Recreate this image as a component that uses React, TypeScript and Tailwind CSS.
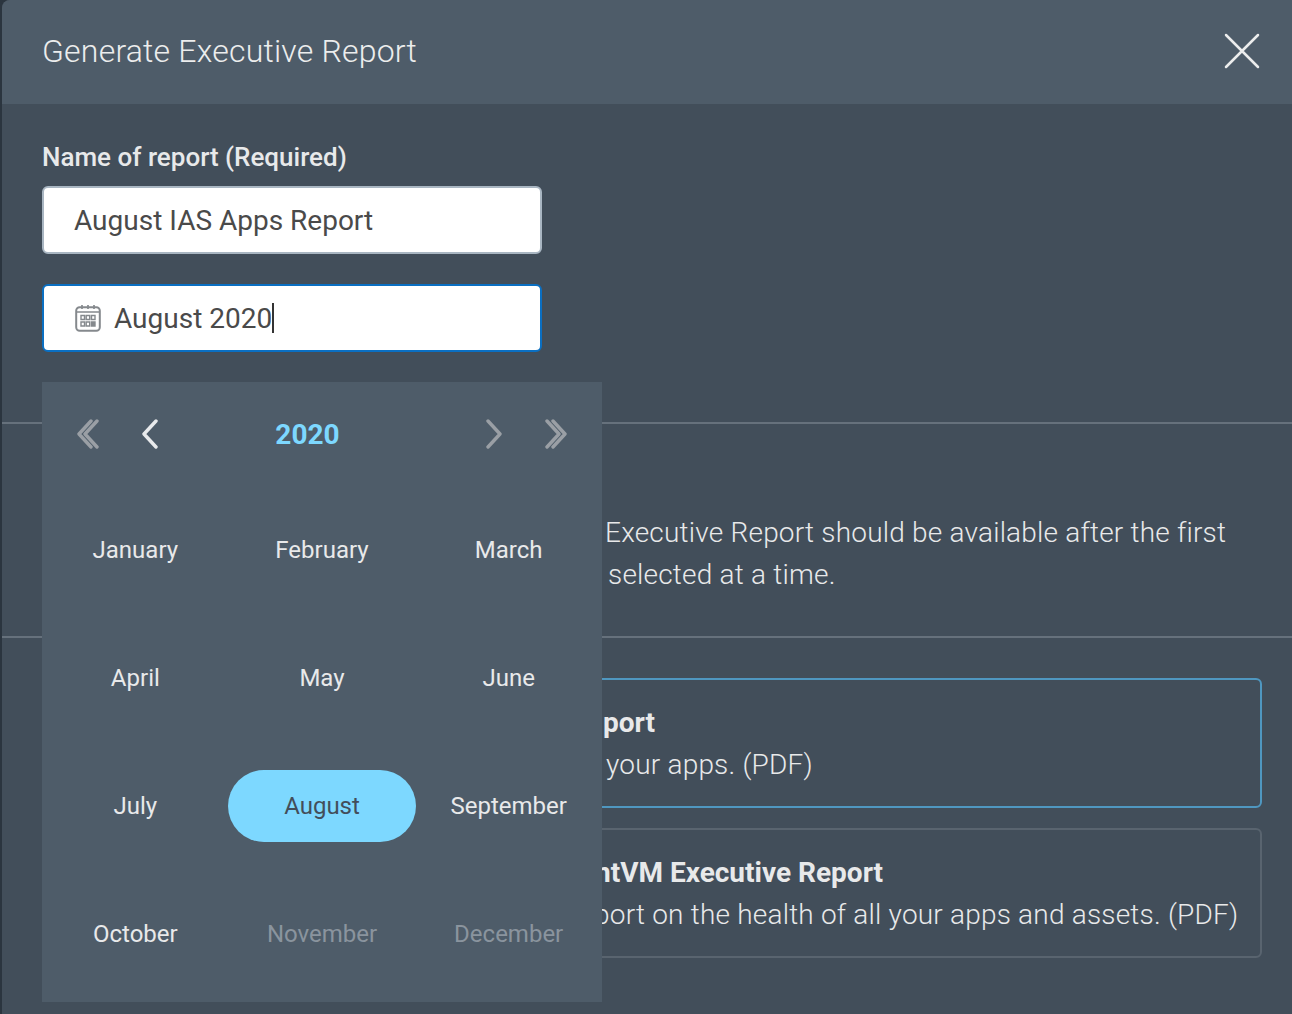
const MONTHS = [
  'January', 'February', 'March',
  'April', 'May', 'June',
  'July', 'August', 'September',
  'October', 'November', 'December',
];
const DISABLED = ['November', 'December'];

function Chevron({ dir, double, light }: { dir: 'left' | 'right'; double?: boolean; light?: boolean }) {
  const color = light ? '#e8eaec' : '#9a9fa5';
  const d = dir === 'left' ? 'M16 2 L4 15 L16 28' : 'M4 2 L16 15 L4 28';
  const d2 = dir === 'left' ? 'M22 2 L10 15 L22 28' : 'M10 2 L22 15 L10 28';
  return (
    <svg width={double ? 26 : 20} height="30" viewBox={double ? '0 0 26 30' : '0 0 20 30'} fill="none" stroke={color} strokeWidth="3.4" strokeLinecap="round" strokeLinejoin="round">
      <path d={d} />
      {double && <path d={d2} />}
    </svg>
  );
}

function CalendarIcon() {
  return (
    <svg width="26" height="28" viewBox="0 0 26 28" fill="none" stroke="#85898d">
      <rect x="1.2" y="3.2" width="23.6" height="23.6" rx="3.5" strokeWidth="2" />
      <path d="M7 1v4M13 1v4M19 1v4M1.5 8h23" strokeWidth="1.7" />
      <path d="M6 11.5h3.5v4H6zM11.2 11.5h3.5v4h-3.5zM16.5 11.5H20v4h-3.5zM6 18h3.5v4H6zM11.2 18h3.5v4h-3.5z" strokeWidth="1.4" />
      <path d="M16.5 18H20v4h-3.5z" fill="#85898d" strokeWidth="1.4" />
    </svg>
  );
}

function ReportCard({ title, desc, active, titleLeft, descLeft }: { title: string; desc: string; active?: boolean; titleLeft: string; descLeft: string }) {
  return (
    <div className={`h-[130px] rounded-[6px] border-2 flex flex-col justify-center pt-[2px] ${active ? 'border-[#4f97c0]' : 'border-[#59646f]'}`}>
      <div className={`text-[28px] leading-[42px] font-bold text-[#e8e9ea] whitespace-nowrap ${titleLeft}`}>{title}</div>
      <div className={`text-[28px] leading-[42px] font-light tracking-[0.2px] text-[#e8e9ea] whitespace-nowrap ${descLeft}`}>{desc}</div>
    </div>
  );
}

export default function App() {
  return (
    <div className="relative w-[1292px] h-[1014px] overflow-hidden bg-[#2b353f] pl-[2px] font-['Roboto',sans-serif]">
      <div className="h-full bg-[#424e5a] rounded-tl-[8px] overflow-hidden">
        <div className="h-[104px] bg-[#4e5c69] flex items-center justify-between pl-[40px] pr-[32px] pb-[2px]">
          <h1 className="text-[32px] font-light text-[#eceded] tracking-[0.2px]">Generate Executive Report</h1>
          <svg width="36" height="36" viewBox="0 0 36 36" fill="none" stroke="#eceded" strokeWidth="2.5" strokeLinecap="round">
            <path d="M2 2 L34 34 M34 2 L2 34" />
          </svg>
        </div>

        <div className="pt-[36px] pl-[40px]">
          <label className="block text-[26px] leading-[34px] font-medium text-[#e8e9ea]">Name of report (Required)</label>
          <div className="mt-[12px] w-[500px] h-[68px] bg-white rounded-[6px] border-2 border-[#a9b6c2] flex items-center pl-[30px] pt-[2px] text-[28px] text-[#4a4a4a]">
            August IAS Apps Report
          </div>
          <div className="mt-[30px] w-[500px] h-[68px] bg-white rounded-[6px] border-2 border-[#0a6fc2] flex items-center pl-[31px] text-[28px] text-[#4a4a4a]">
            <CalendarIcon />
            <span className="ml-[13px] pt-[2px]">August 2020</span>
            <span className="w-[2px] h-[30px] bg-[#333]" />
          </div>
        </div>

        <div className="mt-[70px] h-[2px] bg-[#66717c]" />
        <div className="h-[212px] pt-[88px] pl-[603px] text-[28px] leading-[42px] font-light tracking-[0.2px] text-[#e8e9ea] whitespace-nowrap">
          <div>Executive Report should be available after the first</div>
          <div className="pl-[3px]">selected at a time.</div>
        </div>
        <div className="h-[2px] bg-[#66717c]" />

        <div className="pt-[40px] pl-[40px] pr-[30px] flex flex-col gap-[20px]">
          <ReportCard active title="port" desc="your apps. (PDF)" titleLeft="pl-[559px]" descLeft="pl-[562px]" />
          <ReportCard title="ntVM Executive Report" desc="port on the health of all your apps and assets. (PDF)" titleLeft="pl-[551px]" descLeft="pl-[550px]" />
        </div>
      </div>

      <div className="absolute left-[42px] top-[382px] w-[560px] h-[620px] bg-[#4e5c69]">
        <div className="h-[104px] flex items-center pl-[33px] pr-[33px]">
          <Chevron dir="left" double />
          <div className="ml-[39px]"><Chevron dir="left" light /></div>
          <div className="flex-1 text-center text-[28px] font-bold text-[#7dd8ff] pr-[29px] pt-[2px]">2020</div>
          <div className="mr-[39px]"><Chevron dir="right" /></div>
          <Chevron dir="right" double />
        </div>
        <div className="grid grid-cols-3">
          {MONTHS.map((m) => (
            <div key={m} className="h-[128px] flex items-center justify-center text-[24px]">
              <span className={`h-[72px] w-[188px] shrink-0 rounded-[36px] flex items-center justify-center ${m === 'August' ? 'bg-[#7dd8ff] text-[#434e5a]' : DISABLED.includes(m) ? 'text-[#8a949e]' : 'text-[#e8e9ea]'}`}>
                {m}
              </span>
            </div>
          ))}
        </div>
      </div>
    </div>
  );
}
